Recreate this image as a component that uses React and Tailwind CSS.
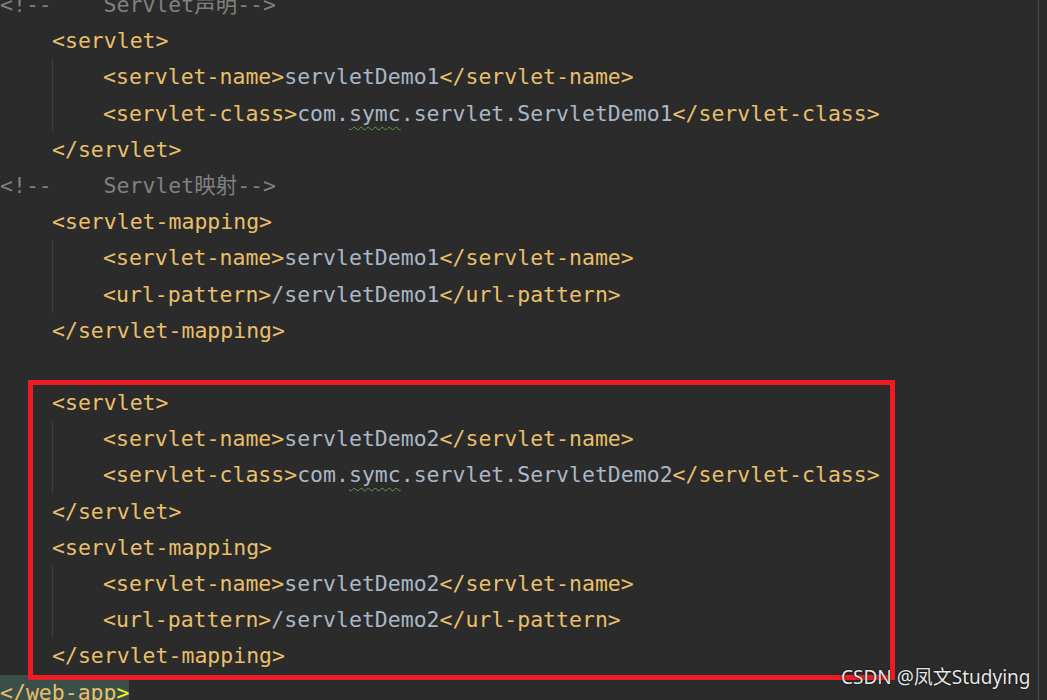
const T = "text-[#e8bf6a]";
const V = "text-[#a9b7c6]";

function Line({ children, className = "" }) {
  return <div className={`h-[36.2px] whitespace-pre ${className}`}>{children}</div>;
}

function Tag({ children }) {
  return <span className={T}>{children}</span>;
}

function Comment({ label }) {
  return (
    <Line>
      <span className="text-[#808080]">{"<!--    " + label + "-->"}</span>
    </Line>
  );
}

function Block({ open, close, children }) {
  return (
    <div className="pl-[52px]">
      <Line>
        <Tag>{open}</Tag>
      </Line>
      <div className="border-l border-[#3d3d3d] pl-[50px]">{children}</div>
      <Line>
        <Tag>{close}</Tag>
      </Line>
    </div>
  );
}

function Elem({ name, children }) {
  return (
    <Line>
      <Tag>{`<${name}>`}</Tag>
      <span className={V}>{children}</span>
      <Tag>{`</${name}>`}</Tag>
    </Line>
  );
}

function ClassName({ n }) {
  return (
    <>
      com.
      <span className="underline decoration-wavy decoration-[#5e9a4e] decoration-1 underline-offset-[5px]">
        symc
      </span>
      .servlet.ServletDemo{n}
    </>
  );
}

export default function App() {
  return (
    <div
      className="flex h-[700px] w-[1047px] overflow-hidden bg-[#2b2b2b] text-[21.5px] leading-[36.2px]"
      style={{ fontFamily: '"DejaVu Sans Mono", "Noto Sans CJK SC", monospace' }}
    >
      <div className="relative w-[1038px]">
        <div className="-mt-[13px]">
          <Comment label="Servlet声明" />
          <Block open="<servlet>" close="</servlet>">
            <Elem name="servlet-name">servletDemo1</Elem>
            <Elem name="servlet-class">
              <ClassName n={1} />
            </Elem>
          </Block>
          <Comment label="Servlet映射" />
          <Block open="<servlet-mapping>" close="</servlet-mapping>">
            <Elem name="servlet-name">servletDemo1</Elem>
            <Elem name="url-pattern">/servletDemo1</Elem>
          </Block>
          <Line />
          <div className="relative">
            <Block open="<servlet>" close="</servlet>">
              <Elem name="servlet-name">servletDemo2</Elem>
              <Elem name="servlet-class">
                <ClassName n={2} />
              </Elem>
            </Block>
            <Block open="<servlet-mapping>" close="</servlet-mapping>">
              <Elem name="servlet-name">servletDemo2</Elem>
              <Elem name="url-pattern">/servletDemo2</Elem>
            </Block>
            <div className="absolute -top-[5px] left-[28px] h-[300px] w-[867px] border-[5px] border-[#ed1c24]" />
          </div>
          <Line>
            <span className="inline-block bg-[#3a4f4a]">
              <Tag>{"</web-app"}</Tag>
              <span className="text-[#ffef28]">{">"}</span>
            </span>
          </Line>
        </div>
        <div
          className="absolute bottom-[13px] left-[841px] text-[19px] leading-none text-[#e6e6e6] [text-shadow:0_0_2px_#000]"
          style={{ fontFamily: '"Noto Sans", "Noto Sans CJK SC", sans-serif' }}
        >
          CSDN @凤文Studying
        </div>
      </div>
      <div className="w-px bg-[#4a4a4a]" />
      <div className="flex-1" />
    </div>
  );
}
